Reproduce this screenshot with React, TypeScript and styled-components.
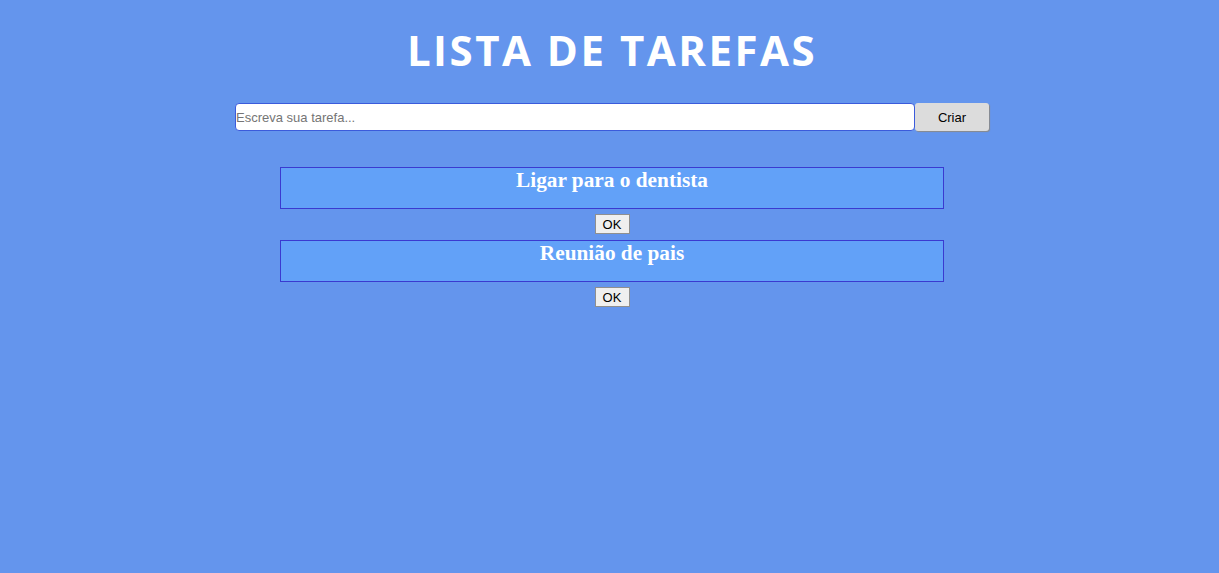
import React from "react";
import styled, { createGlobalStyle } from "styled-components";

const Global = createGlobalStyle`
  html, body { margin: 0; padding: 0; background: #6495ed; }
  body { font-family: "Liberation Serif", serif; }
`;

const Page = styled.main`
  min-height: 573px;
  display: flex;
  flex-direction: column;
  align-items: center;
  padding-left: 5px;
  box-sizing: border-box;
`;

const Title = styled.h1`
  margin: 23px 0 0;
  font-family: "Comic Sans MS", "Open Sans", sans-serif;
  font-weight: 700;
  font-size: 42px;
  line-height: 54px;
  letter-spacing: 2.5px;
  color: #ffffff;
`;

const Form = styled.form`
  display: flex;
  margin-top: 26px;
`;

const Input = styled.input`
  width: 680px;
  height: 28px;
  box-sizing: border-box;
  border: 1px solid #3b5bdb;
  border-radius: 4px;
  padding: 0;
  font-family: "Liberation Sans", Arial, sans-serif;
  font-size: 13px;
  background: #fff;
  outline: none;
  &::placeholder { color: #757575; }
`;

const CreateButton = styled.button`
  width: 74px;
  height: 28px;
  background: #dcdcdc;
  border: none;
  border-radius: 3px;
  box-shadow: 1px 1px 1px #8a8a8a;
  font-family: "Liberation Sans", Arial, sans-serif;
  font-size: 13px;
  color: #000;
`;

const List = styled.section`
  display: flex;
  flex-direction: column;
  align-items: center;
  margin-top: 36px;
`;

const Task = styled.div`
  width: 662px;
  height: 40px;
  border: 1px solid #3a3ad0;
  background: #62a1f8;
`;

const TaskTitle = styled.h3`
  margin: 1px 0 0;
  text-align: center;
  font-family: "Liberation Serif", serif;
  font-weight: bold;
  font-size: 21.3px;
  line-height: 22px;
  color: #ffffff;
`;

const OkButton = styled.button`
  margin: 5px 0 6px;
  width: 35px;
  height: 20px;
  padding: 0;
  font-family: "Liberation Sans", Arial, sans-serif;
  font-size: 13px;
  color: #000;
  background: #efefef;
  border: 1px solid #8f8f8f;
  border-radius: 0;
`;

const tasks = ["Ligar para o dentista", "Reunião de pais"];

export default function App() {
  return (
    <>
      <Global />
      <Page>
        <Title>LISTA DE TAREFAS</Title>
        <Form onSubmit={(e) => e.preventDefault()}>
          <Input placeholder="Escreva sua tarefa..." />
          <CreateButton type="submit">Criar</CreateButton>
        </Form>
        <List>
          {tasks.map((t) => (
            <React.Fragment key={t}>
              <Task>
                <TaskTitle>{t}</TaskTitle>
              </Task>
              <OkButton>OK</OkButton>
            </React.Fragment>
          ))}
        </List>
      </Page>
    </>
  );
}
